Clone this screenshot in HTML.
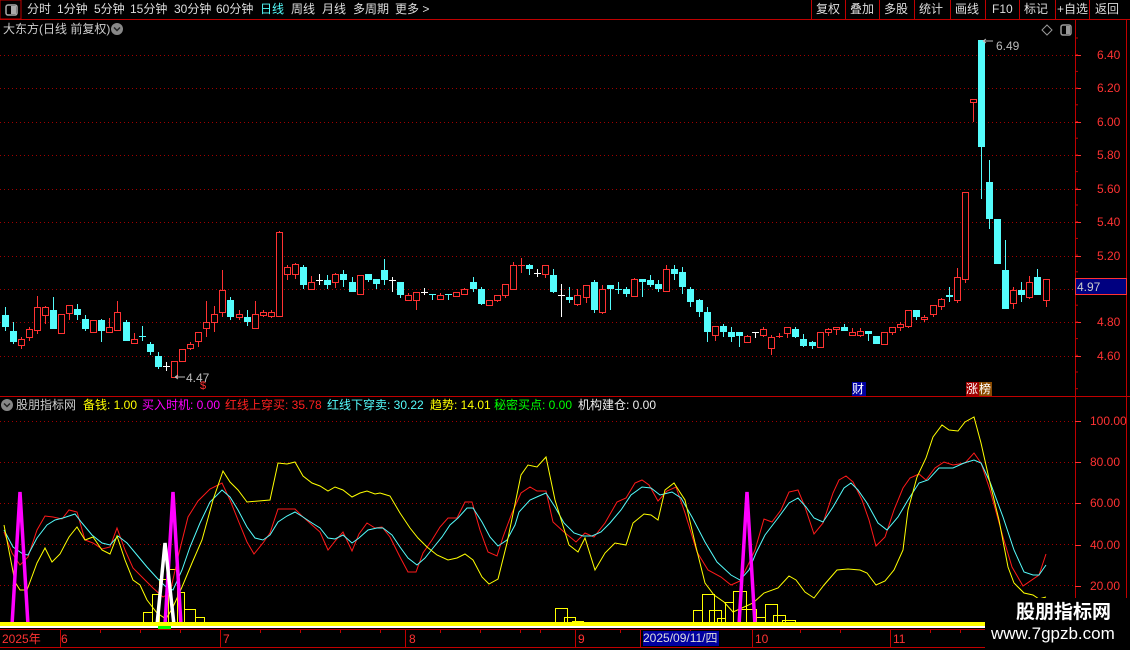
<!DOCTYPE html>
<html><head><meta charset="utf-8">
<style>
html,body{margin:0;padding:0;background:#000;width:1130px;height:650px;overflow:hidden}
body{position:relative;font-family:"Liberation Sans","Noto Sans CJK SC",sans-serif}
.t{position:absolute;white-space:nowrap;font-size:12px;line-height:15px}
svg{position:absolute;left:0;top:0}
</style></head><body>
<svg id="s" width="1130" height="650" xmlns="http://www.w3.org/2000/svg"></svg>

<div class="t" style="left:27px;top:2px;color:#ddd">分时</div>
<div class="t" style="left:57px;top:2px;color:#ddd">1分钟</div>
<div class="t" style="left:94px;top:2px;color:#ddd">5分钟</div>
<div class="t" style="left:130px;top:2px;color:#ddd">15分钟</div>
<div class="t" style="left:174px;top:2px;color:#ddd">30分钟</div>
<div class="t" style="left:216px;top:2px;color:#ddd">60分钟</div>
<div class="t" style="left:260px;top:2px;color:#54fcfc">日线</div>
<div class="t" style="left:291px;top:2px;color:#ddd">周线</div>
<div class="t" style="left:322px;top:2px;color:#ddd">月线</div>
<div class="t" style="left:353px;top:2px;color:#ddd">多周期</div>
<div class="t" style="left:395px;top:2px;color:#ddd">更多 &gt;</div>

<div class="t" style="left:816px;top:2px;color:#ddd">复权</div>
<div class="t" style="left:850px;top:2px;color:#ddd">叠加</div>
<div class="t" style="left:884px;top:2px;color:#ddd">多股</div>
<div class="t" style="left:919px;top:2px;color:#ddd">统计</div>
<div class="t" style="left:955px;top:2px;color:#ddd">画线</div>
<div class="t" style="left:992px;top:2px;color:#ddd">F10</div>
<div class="t" style="left:1024px;top:2px;color:#ddd">标记</div>
<div class="t" style="left:1057px;top:2px;color:#ddd">+自选</div>
<div class="t" style="left:1095px;top:2px;color:#ddd">返回</div>

<div class="t" style="left:3px;top:22px;color:#ccc">大东方(日线 前复权)</div>

<div class="t" style="left:16px;top:398px;color:#ccc">股朋指标网</div>
<div class="t" style="left:83px;top:398px;color:#ffff00">备钱: 1.00</div>
<div class="t" style="left:142px;top:398px;color:#ff00ff">买入时机: 0.00</div>
<div class="t" style="left:225px;top:398px;color:#ff2020">红线上穿买: 35.78</div>
<div class="t" style="left:327px;top:398px;color:#54fcfc">红线下穿卖: 30.22</div>
<div class="t" style="left:430px;top:398px;color:#ffff00">趋势: 14.01</div>
<div class="t" style="left:494px;top:398px;color:#00ff00">秘密买点: 0.00</div>
<div class="t" style="left:578px;top:398px;color:#eee">机构建仓: 0.00</div>

<div class="t" style="left:186px;top:371px;color:#bbb">4.47</div>
<div class="t" style="left:996px;top:39px;color:#bbb">6.49</div>

<div class="t" style="left:852px;top:382px;width:14px;height:14px;line-height:14px;background:#0000a0;color:#fff">财</div>
<div class="t" style="left:966px;top:382px;width:13px;height:14px;line-height:14px;background:#a00000;color:#fff">涨</div>
<div class="t" style="left:979px;top:382px;width:13px;height:14px;line-height:14px;background:#8a4a00;color:#fff">榜</div>

<div class="t" style="left:2px;top:632px;color:#ff3232">2025年</div>
<div class="t" style="left:61px;top:632px;color:#ff3232">6</div>
<div class="t" style="left:223px;top:632px;color:#ff3232">7</div>
<div class="t" style="left:409px;top:632px;color:#ff3232">8</div>
<div class="t" style="left:578px;top:632px;color:#ff3232">9</div>
<div class="t" style="left:643px;top:631px;width:76px;height:15px;background:#0000a0;color:#ddd">2025/09/11/四</div>
<div class="t" style="left:755px;top:632px;color:#ff3232">10</div>
<div class="t" style="left:893px;top:632px;color:#ff3232">11</div>

<div style="position:absolute;left:985px;top:598px;width:145px;height:52px;background:#000"></div>
<div class="t" style="left:1016px;top:602px;font-size:19px;line-height:22px;font-weight:bold;color:#fff">股朋指标网</div>
<div class="t" style="left:991px;top:624px;font-size:17px;line-height:20px;color:#fff">www.7gpzb.com</div>

<script>
const s=document.getElementById('s');let h='';
const R='#ff3232',C='#54fcfc';
h+=`<rect x="0" y="0" width="21" height="19" fill="none" stroke="#c00000"/>`;
h+=`<rect x="6" y="5" width="11" height="10" rx="2" fill="none" stroke="#aaa" stroke-width="1.5"/><rect x="11" y="6" width="5" height="8" fill="#aaa"/>`;
h+=`<line x1="0" y1="19.5" x2="1130" y2="19.5" stroke="#c00000"/>`;
[811,845,879,914,950,985,1019,1055,1089].forEach(x=>h+=`<line x1="${x+.5}" y1="0" x2="${x+.5}" y2="19" stroke="#c00000"/>`);
[55,88,122,155,189,222,256,289,322,356].forEach(y=>h+=`<line x1="0" y1="${y+.5}" x2="1075" y2="${y+.5}" stroke="#a00000" stroke-dasharray="1,3"/>`);
[421.5,462.5,503.5,544.5,585.5].forEach(y=>h+=`<line x1="0" y1="${y}" x2="1075" y2="${y}" stroke="#a00000" stroke-dasharray="1,3"/>`);
h+=`<line x1="1075.5" y1="20" x2="1075.5" y2="650" stroke="#c00000"/><line x1="1126.5" y1="20" x2="1126.5" y2="650" stroke="#c00000"/>`;
h+=`<line x1="0" y1="396.5" x2="1130" y2="396.5" stroke="#c00000"/>`;
[['6.40',55],['6.20',88],['6.00',122],['5.80',155],['5.60',189],['5.40',222],['5.20',256],['4.80',322],['4.60',356]].forEach(([t,y])=>{h+=`<text x="1097" y="${y+4}" fill="${R}" font-size="12" font-family="Liberation Sans">${t}</text><line x1="1075" y1="${y+.5}" x2="1081" y2="${y+.5}" stroke="${R}"/>`;});
for(let y=38;y<396;y+=16.7)h+=`<line x1="1075" y1="${y}" x2="1078" y2="${y}" stroke="#c00000"/>`;
[['100.00',421],['80.00',462],['60.00',503],['40.00',545],['20.00',586]].forEach(([t,y])=>{h+=`<text x="1090" y="${y+4}" fill="${R}" font-size="12" font-family="Liberation Sans">${t}</text><line x1="1075" y1="${y+.5}" x2="1081" y2="${y+.5}" stroke="${R}"/>`;});
h+=`<rect x="1075.5" y="278.5" width="51" height="16" fill="#000080" stroke="${R}"/><text x="1077" y="291" fill="#ccc" font-size="12" font-family="Liberation Sans">4.97</text>`;
h+=`<circle cx="117" cy="29" r="6" fill="#888"/><path d="M114 27.5l3 3 3-3" stroke="#222" stroke-width="1.5" fill="none"/>`;
h+=`<circle cx="7" cy="405" r="6" fill="#888"/><path d="M4 403.5l3 3 3-3" stroke="#222" stroke-width="1.5" fill="none"/>`;
h+=`<path d="M1047 25l5 5-5 5-5-5z" fill="none" stroke="#999"/>`;
h+=`<rect x="1061" y="25" width="10" height="10" rx="2" fill="none" stroke="#999" stroke-width="1.5"/><rect x="1066" y="26" width="4" height="8" fill="#999"/>`;
const D=`c 315 327 307 331|c 331 342 322 344|r 339 345 337 349|r 329 337 327 341|r 307 330 296 334|r 307 315 306 324|c 310 329 297 329|r 314 333 314 333|r 305 313 305 320|c 309 315 304 320|c 319 329 315 331|r 320 332 320 332|c 320 331 319 342|r 327 332 318 332|r 312 330 301 330|c 322 341 320 341|r 339 343 333 343|cc 336 336 326 341|c 344 352 342 355|c 356 367 352 369|w 366 366 362 371|r 361 377 361 377|r 349 361 349 361|r 344 348 342 350|r 332 341 332 347|r 322 328 301 337|r 314 322 306 332|r 290 312 270 317|c 300 317 297 320|r 314 317 310 320|c 317 322 310 326|r 314 328 301 329|r 312 315 310 317|r 312 316 310 318|r 232 316 231 316|r 267 274 265 280|r 264 274 263 279|c 267 285 265 289|r 282 289 276 289|w 280 280 274 285|c 280 285 275 289|r 274 282 273 288|c 274 280 270 287|c 282 292 277 292|r 275 294 275 294|c 274 280 274 282|c 279 284 279 289|c 270 280 259 285|w 280 280 277 292|c 282 295 282 298|r 295 300 293 300|r 292 300 292 310|w 292 292 288 295|cc 294 294 294 300|r 295 299 293 299|cc 294 294 294 300|r 292 296 292 296|r 289 294 288 294|c 282 289 277 292|c 289 304 287 305|r 300 305 300 305|r 295 300 295 302|r 284 295 284 298|r 265 289 262 289|rc 265 266 258 273|c 265 269 264 275|w 273 273 269 277|r 265 274 265 278|c 275 292 269 293|w 295 295 284 317|c 297 300 287 303|r 295 304 289 306|r 285 297 285 303|c 282 310 280 313|r 289 312 285 314|c 285 289 285 310|cc 289 289 282 294|c 289 294 287 297|r 279 296 278 296|c 279 282 279 297|c 280 285 275 287|c 284 289 280 292|r 269 291 265 291|c 269 274 265 280|c 272 287 267 294|c 289 302 287 307|c 300 312 299 317|c 312 332 307 342|r 326 335 326 341|c 326 332 324 337|c 332 337 327 342|c 332 336 332 347|r 336 342 335 342|w 332 332 332 338|r 329 335 327 337|r 337 348 335 355|rc 336 336 333 338|r 327 333 327 338|c 329 337 327 338|c 339 346 334 347|c 342 346 341 349|r 332 347 332 347|r 329 332 328 336|r 327 329 327 335|c 327 331 324 331|r 332 335 328 336|r 331 335 328 337|c 331 334 331 341|c 336 344 336 344|r 332 344 332 344|r 327 332 327 335|r 324 327 322 331|r 310 326 310 328|c 310 317 310 320|r 317 319 315 322|r 305 314 305 317|r 299 306 298 310|c 295 297 287 302|r 277 300 268 303|r 192 279 192 283|r 99 102 99 122|c 40 147 40 199|c 182 219 160 229|c 219 264 219 264|c 270 309 240 309|r 290 303 287 309|c 290 295 282 302|r 282 297 276 299|c 277 295 269 295|r 279 300 279 307`.split('|');
D.forEach((d,i)=>{const a=d.split(' ');const t=a[0],bt=+a[1],bb=+a[2],wt=+a[3],wb=+a[4];const cx=Math.round(4.5+8.07*i);const col=t[0]=='r'?R:t[0]=='c'?C:'#fff';
h+=`<line x1="${cx+.5}" y1="${wt}" x2="${cx+.5}" y2="${wb}" stroke="${col}"/>`;
if(t=='r')h+=`<rect x="${cx-2.5}" y="${bt+.5}" width="6" height="${Math.max(bb-bt,1)}" fill="#000" stroke="${R}"/>`;
else if(t=='c')h+=`<rect x="${cx-3}" y="${bt}" width="7" height="${Math.max(bb-bt,1)}" fill="${C}"/>`;
else h+=`<line x1="${cx-3}" y1="${bt+.5}" x2="${cx+4}" y2="${bt+.5}" stroke="${col}"/>`;});
h+=`<path d="M175 377h10M175 377l3-2M175 377l3 2" stroke="#bbb"/><path d="M983 41h10M983 41l3-2M983 41l3 2" stroke="#bbb"/>`;
h+=`<text x="200" y="389" fill="${R}" font-size="11" font-family="Liberation Sans">$</text>`;
const P=(pts,c,w)=>`<polyline points="${pts}" fill="none" stroke="${c}" stroke-width="${w||1}"/>`;
[[143,152,612],[152,159,594],[159,168,579],[168,177,569],[177,184,592],[184,195,609],[195,204,617],[204,213,622],[555,567,608],[564,575,617],[572,583,621],[693,702,610],[702,714,594],[709,721,610],[717,725,618],[725,733,602],[733,746,591],[740,756,609],[756,765,617],[765,777,604],[773,785,615],[782,795,620],[790,803,623]].forEach(([a,b,y])=>h+=`<rect x="${a+.5}" y="${y+.5}" width="${b-a}" height="${625-y}" fill="none" stroke="#ffff00"/>`);
h+=P("4,532 12,553 20,565 28,557 37,530 45,516 53,517 62,519 69,510 77,512 85,540 93,543 102,549 110,547 117,528 125,550 133,568 143,578 153,588 163,597 170,593 178,557 188,517 198,501 210,489 222,483 230,500 238,520 247,542 254,554 263,543 270,533 278,509 295,509 303,517 312,525 320,532 328,550 336,540 343,532 352,551 359,534 367,523 375,528 382,527 390,537 400,557 408,572 416,572 423,553 432,540 440,527 448,518 457,518 465,502 472,502 480,530 488,552 497,556 503,537 512,513 521,493 530,487 537,491 546,491 553,522 564,532 576,542 585,533 594,537 605,523 617,502 626,498 635,483 642,480 649,485 658,501 667,491 676,487 685,513 697,552 708,570 721,577 731,585 740,581 749,563 755,550 764,519 772,522 781,510 789,492 798,490 805,507 814,534 823,523 833,493 839,480 846,476 853,482 862,500 869,520 876,546 885,537 894,510 903,488 910,478 919,474 926,480 935,468 944,462 953,465 965,463 974,453 981,463 990,490 1003,537 1012,567 1023,586 1039,575 1046,554",'#ff1a1a');
h+=P("4,530 13,547 23,554 28,555 37,538 47,525 55,520 63,518 75,514 82,523 92,535 102,543 110,545 118,536 127,543 137,555 147,567 157,578 167,588 173,590 182,570 190,547 200,523 210,502 222,490 230,497 238,510 247,527 255,538 263,540 270,535 278,522 287,516 295,512 303,517 312,523 320,528 328,538 335,539 343,535 352,543 359,538 368,530 377,528 383,528 392,535 400,547 408,558 417,565 425,558 433,548 442,537 450,525 458,518 467,508 473,508 482,522 490,537 498,546 507,540 515,525 519,512 530,500 539,496 546,493 555,507 564,523 574,533 583,536 592,536 601,532 610,523 621,510 631,495 642,487 651,488 660,495 672,492 681,498 692,517 705,542 717,562 731,575 740,580 749,570 756,553 765,535 778,518 789,503 798,498 806,507 814,518 823,522 833,507 844,488 851,483 858,490 867,503 878,523 887,530 898,517 908,500 919,483 928,480 939,468 953,468 964,463 974,460 981,463 990,482 1003,517 1014,550 1024,572 1033,575 1039,575 1046,565",C);
h+=P("4,525 15,582 20,590 27,590 37,563 45,548 52,562 60,554 69,537 77,527 85,540 93,537 102,550 110,554 117,536 125,560 133,580 140,585 147,600 157,613 166,619 173,607 182,587 192,563 202,540 213,500 223,471 230,482 238,490 247,502 270,500 278,463 287,464 295,462 303,476 312,483 320,486 328,491 335,487 343,490 352,497 360,493 367,491 375,494 380,493 390,496 400,513 410,528 418,538 427,547 437,555 448,560 457,558 465,554 473,560 482,577 489,584 498,579 507,543 521,475 528,465 537,467 546,457 555,500 569,545 578,552 585,538 595,570 605,553 615,543 626,545 633,523 644,514 651,515 658,520 665,490 674,483 685,500 696,547 705,583 714,595 724,602 733,612 742,608 753,603 764,593 778,588 789,576 796,580 805,592 814,598 824,585 837,570 848,569 860,570 867,573 876,585 885,581 894,570 903,550 908,510 917,477 926,458 933,437 942,425 949,430 958,431 965,422 974,417 981,443 990,483 999,520 1008,567 1014,583 1024,593 1033,595 1039,599 1046,597",'#ffff00');
[[20,492,'#ff00ff'],[173,492,'#ff00ff'],[747,492,'#ff00ff']].forEach(([x,y,c])=>h+=`<path d="M${x-8} 625L${x} ${y}L${x+8} 625" fill="none" stroke="${c}" stroke-width="3.5"/><path d="M${x-2} ${y+25}L${x} ${y}L${x+2} ${y+25}z" fill="${c}"/>`);
h+=`<path d="M157 625L165 543L174 625" fill="none" stroke="#fff" stroke-width="3.5"/>`;
h+=`<rect x="0" y="622" width="985" height="4" fill="#ffff00"/><rect x="0" y="626" width="985" height="2" fill="#fff"/><rect x="158" y="626" width="13" height="3" fill="#00ff00"/>`;
h+=`<line x1="0" y1="629.5" x2="985" y2="629.5" stroke="#c00000"/><line x1="0" y1="647.5" x2="1130" y2="647.5" stroke="#c00000"/>`;
[60,220,405,575,640,752,890].forEach(x=>h+=`<line x1="${x+.5}" y1="630" x2="${x+.5}" y2="647" stroke="#c00000"/>`);
[100,140,180,260,300,340,380,440,480,520,540,620,690,800,840,930,960].forEach(x=>h+=`<line x1="${x+.5}" y1="630" x2="${x+.5}" y2="633" stroke="#c00000"/>`);
s.innerHTML=h;
</script>
</body></html>
